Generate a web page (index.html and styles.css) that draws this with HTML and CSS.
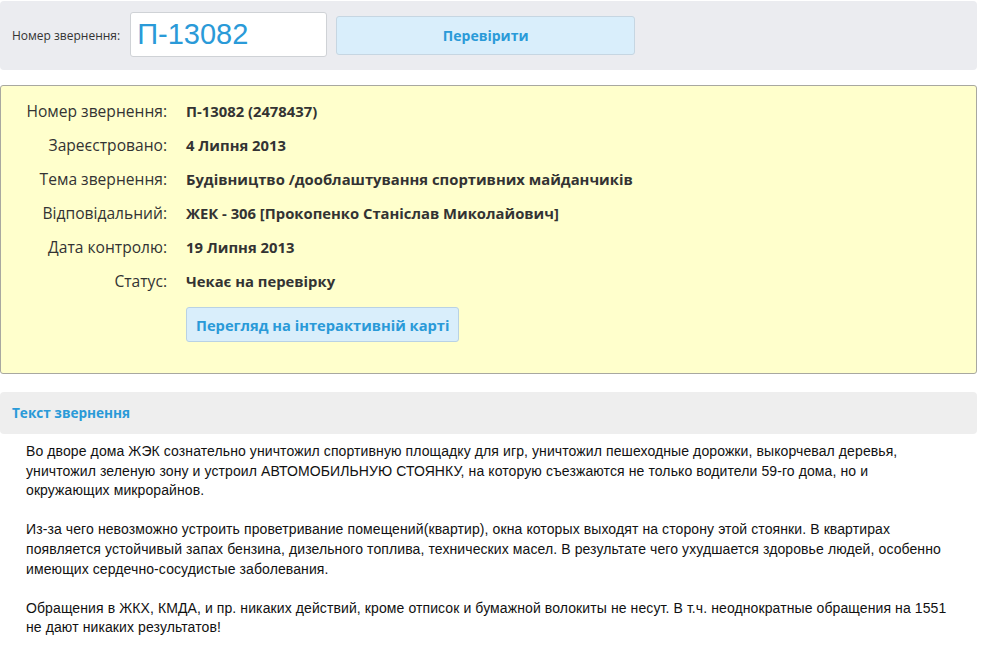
FILE: index.html
```html
<!DOCTYPE html>
<html lang="uk">
<head>
<meta charset="UTF-8">
<title>Перевірка звернення</title>
<link rel="stylesheet" href="styles.css">
</head>
<body>
<div class="page">
  <form class="search-bar">
    <label class="search-label" for="num">Номер звернення:</label>
    <input class="search-input" id="num" type="text" value="П-13082">
    <button class="search-btn" type="button">Перевірити</button>
  </form>

  <div class="info-box">
    <div class="info-grid">
      <div class="info-label">Номер звернення:</div>
      <div class="info-value">П-13082 (2478437)</div>
      <div class="info-label">Зареєстровано:</div>
      <div class="info-value">4 Липня 2013</div>
      <div class="info-label">Тема звернення:</div>
      <div class="info-value">Будівництво /дооблаштування спортивних майданчиків</div>
      <div class="info-label">Відповідальний:</div>
      <div class="info-value">ЖЕК - 306 [Прокопенко Станіслав Миколайович]</div>
      <div class="info-label">Дата контролю:</div>
      <div class="info-value">19 Липня 2013</div>
      <div class="info-label">Статус:</div>
      <div class="info-value">Чекає на перевірку</div>
      <div></div>
      <div><button class="map-btn" type="button">Перегляд на інтерактивній карті</button></div>
    </div>
  </div>

  <div class="section-head">Текст звернення</div>
  <div class="section-text">
    Во дворе дома ЖЭК сознательно уничтожил спортивную площадку для игр, уничтожил пешеходные дорожки, выкорчевал деревья, уничтожил зеленую зону и устроил АВТОМОБИЛЬНУЮ СТОЯНКУ, на которую съезжаются не только водители 59-го дома, но и окружающих микрорайнов.<br><br>
    Из-за чего невозможно устроить проветривание помещений(квартир), окна которых выходят на сторону этой стоянки. В квартирах появляется устойчивый запах бензина, дизельного топлива, технических масел. В результате чего ухудшается здоровье людей, особенно имеющих сердечно-сосудистые заболевания.<br><br>
    Обращения в ЖКХ, КМДА, и пр. никаких действий, кроме отписок и бумажной волокиты не несут. В т.ч. неоднократные обращения на 1551 не дают никаких результатов!
  </div>
</div>
</body>
</html>
```

FILE: styles.css
```css
body {
  margin: 0;
  background: #fff;
  font-family: "Open Sans", Arial, sans-serif;
  color: #333;
}
.page {
  width: 977px;
  padding-top: 1px;
}
.search-bar {
  display: flex;
  align-items: center;
  height: 69px;
  margin: 0;
  padding: 0 12px;
  background: #ebecf0;
  border-radius: 4px;
  box-sizing: border-box;
}
.search-label {
  font-size: 12px;
  color: #333;
  margin-right: 10px;
}
.search-input {
  width: 197px;
  height: 45px;
  box-sizing: border-box;
  margin: -2px 9px 0 0;
  padding: 0 6px;
  border: 1px solid #cfd2d6;
  border-radius: 3px;
  background: #fff;
  font-family: "Liberation Sans", Arial, sans-serif;
  font-size: 29px;
  color: #2a9ad8;
}
.search-btn {
  width: 299px;
  height: 39px;
  margin-top: -1px;
  border: 1px solid #c6d6e2;
  border-radius: 3px;
  background: #d9eefb;
  color: #2a9ad8;
  font-family: "Open Sans", Arial, sans-serif;
  font-size: 14px;
  font-weight: bold;
}
.info-box {
  margin-top: 15px;
  padding: 8px 0 31px;
  background: #ffffcc;
  border: 1px solid #a8a8a0;
  border-radius: 3px;
}
.info-grid {
  display: grid;
  grid-template-columns: 166px 1fr;
  grid-template-rows: repeat(6, 34px) auto;
  column-gap: 19px;
  align-items: center;
}
.info-label {
  text-align: right;
  font-size: 15.6px;
  color: #333;
}
.info-value {
  font-size: 14.8px;
  font-weight: bold;
  color: #333;
}
.map-btn {
  display: block;
  margin-top: 9px;
  height: 35px;
  padding: 0 9px;
  border: 1px solid #b9d2e4;
  border-radius: 3px;
  background: #d9eefb;
  color: #2a9ad8;
  font-family: "Open Sans", Arial, sans-serif;
  font-size: 14.7px;
  font-weight: bold;
}
.section-head {
  margin-top: 18px;
  height: 42px;
  line-height: 41px;
  padding: 0 12px;
  background: #eeeeee;
  border-radius: 4px;
  color: #2a9ad8;
  font-size: 13.6px;
  font-weight: bold;
}
.section-text {
  padding: 8px 27px 0 26px;
  font-family: "Liberation Sans", Arial, sans-serif;
  font-size: 14px;
  line-height: 19.6px;
  letter-spacing: 0.1px;
  color: #111;
}
```
